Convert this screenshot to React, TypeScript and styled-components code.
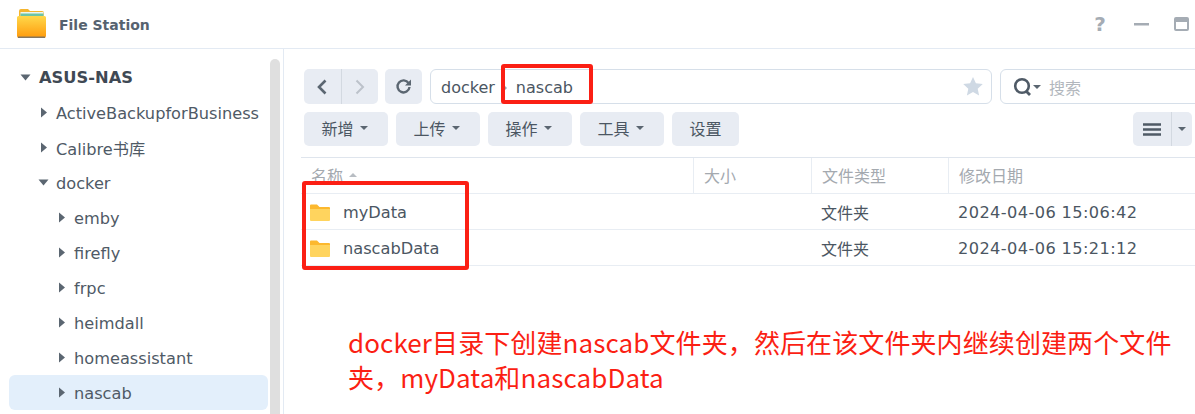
import React from 'react';
import styled, { createGlobalStyle } from 'styled-components';

const GlobalStyle = createGlobalStyle`
  html, body {
    margin: 0;
    padding: 0;
    background: #fff;
    overflow: hidden;
  }
  body {
    font-family: "DejaVu Sans", "Noto Sans CJK SC", sans-serif;
    color: #414b55;
  }
`;

const Page = styled.div`
  position: relative;
  width: 1195px;
  height: 414px;
  overflow: hidden;
  background: #fff;
`;

const TitleBar = styled.header`
  height: 48px;
  display: flex;
  align-items: center;
  padding-left: 16px;
  border-bottom: 1px solid #e3eaf3;
`;

const AppName = styled.span`
  margin-left: 12px;
  padding-top: 2px;
  font-size: 14px;
  font-weight: 700;
  color: #56626f;
`;

const WindowControls = styled.div`
  margin-left: auto;
  display: flex;
  align-items: center;
  padding-right: 6px;
`;

const HelpMark = styled.span`
  font-size: 20px;
  font-weight: 700;
  color: #a5acb4;
  width: 14px;
  text-align: center;
  margin-right: 27px;
`;

const MinimizeIcon = styled.svg`
  margin-right: 25px;
`;

const Body = styled.div`
  display: flex;
  height: 365px;
`;

const Sidebar = styled.nav`
  width: 284px;
  flex: none;
  box-sizing: border-box;
  border-right: 1px solid #e3eaf3;
  padding: 11px 0 0 9px;
  position: relative;
`;

const ScrollThumb = styled.div`
  position: absolute;
  left: 270px;
  top: 10px;
  width: 10px;
  height: 380px;
  border-radius: 5px;
  background: #dfdfdf;
`;

const TreeRow = styled.div<{ $depth: number; $selected?: boolean; $root?: boolean }>`
  width: 259px;
  height: 35px;
  box-sizing: border-box;
  display: flex;
  align-items: center;
  padding-left: ${p => (p.$root ? 11 : 11 + p.$depth * 18)}px;
  border-radius: 6px;
  background: ${p => (p.$selected ? '#e3effb' : 'transparent')};
  font-size: ${p => (p.$root ? 16.3 : 16.2)}px;
  font-weight: ${p => (p.$root ? 700 : 400)};
  color: ${p => (p.$root ? '#3f4954' : '#4f5a66')};
`;

const TreeLabel = styled.span<{ $root?: boolean }>`
  margin-left: ${p => (p.$root ? 8 : 7)}px;
  padding-top: ${p => (p.$root ? 0 : 1)}px;
  white-space: nowrap;
`;

const Main = styled.main`
  flex: 1;
  min-width: 0;
  padding: 20px 0 0 17px;
`;

const ToolRow = styled.div`
  display: flex;
  align-items: center;
  padding-left: 3px;
`;

const PathRow = styled(ToolRow)`
  height: 35px;
`;

const ActionRow = styled(ToolRow)`
  height: 34px;
  margin-top: 8px;
  gap: 8px;
`;

const NavGroup = styled.div`
  display: flex;
  width: 74px;
  height: 35px;
  background: #e8ecf3;
  border-radius: 5px;
  flex: none;
`;

const NavCell = styled.div<{ $divider?: boolean }>`
  flex: 1;
  display: flex;
  align-items: center;
  justify-content: center;
  border-left: ${p => (p.$divider ? '1px solid #d3d9e1' : 'none')};
`;

const RefreshButton = styled.div`
  width: 37px;
  height: 35px;
  margin-left: 7px;
  flex: none;
  background: #e8ecf3;
  border-radius: 5px;
  display: flex;
  align-items: center;
  justify-content: center;
`;

const PathBox = styled.div`
  width: 562px;
  height: 35px;
  margin-left: 8px;
  flex: none;
  box-sizing: border-box;
  border: 1px solid #d6dfe9;
  border-radius: 6px;
  display: flex;
  align-items: center;
  padding: 0 8px 0 10px;
  font-size: 16px;
  color: #4b5662;
`;

const PathText = styled.span`
  padding-top: 2px;
`;

const PathCaret = styled.span`
  width: 0;
  height: 0;
  margin: 2px 9px 0 8px;
  border-left: 4px solid #9aa3ad;
  border-top: 4px solid transparent;
  border-bottom: 4px solid transparent;
`;

const PathStar = styled.svg`
  margin-left: auto;
`;

const SearchBox = styled.div`
  width: 210px;
  height: 35px;
  margin-left: 8px;
  flex: none;
  box-sizing: border-box;
  border: 1px solid #d6dfe9;
  border-radius: 6px;
  display: flex;
  align-items: center;
  padding-left: 12px;
`;

const SearchHint = styled.span`
  margin-left: 8px;
  font-size: 16px;
  color: #b2b7bd;
`;

const ActionButton = styled.div<{ $plain?: boolean }>`
  width: ${p => (p.$plain ? 67 : 84)}px;
  height: 34px;
  flex: none;
  box-sizing: border-box;
  padding: 0 ${p => (p.$plain ? 0 : 3)}px 2px 0;
  background: #e8ecf3;
  border-radius: 5px;
  display: flex;
  align-items: center;
  justify-content: center;
  gap: 6px;
  font-size: 16px;
  color: #4b5662;
`;

const Caret = styled.span<{ $color?: string; $up?: boolean }>`
  width: 0;
  height: 0;
  border-top: 4px solid ${p => p.$color ?? '#5b6671'};
  border-left: 4px solid transparent;
  border-right: 4px solid transparent;
  transform: ${p => (p.$up ? 'rotate(180deg)' : 'none')};
`;

const ViewSwitch = styled.div`
  margin-left: auto;
  margin-right: 3px;
  width: 59px;
  height: 34px;
  display: flex;
  background: #e8ecf3;
  border-radius: 5px;
`;

const ViewCell = styled.div<{ $narrow?: boolean }>`
  width: ${p => (p.$narrow ? 20 : 38)}px;
  display: flex;
  align-items: center;
  justify-content: center;
  border-left: ${p => (p.$narrow ? '1px solid #d3d9e1' : 'none')};
`;

const FileTable = styled.div`
  margin-top: 11px;
  border-top: 1px solid #dfe5ed;
`;

const Columns = styled.div`
  display: grid;
  grid-template-columns: 392px 118px 137px 1fr;
  align-items: stretch;
  height: 35px;
  border-bottom: 1px solid #e8edf3;
`;

const HeaderCell = styled.div<{ $first?: boolean }>`
  display: flex;
  align-items: center;
  gap: 6px;
  padding: 0 0 2px 10px;
  border-left: ${p => (p.$first ? 'none' : '1px solid #e8edf3')};
  font-size: 16px;
  color: #a4a9af;
`;

const FileCell = styled.div<{ $date?: boolean }>`
  display: flex;
  align-items: center;
  padding-left: 10px;
  padding-top: ${p => (p.$date ? 2 : 0)}px;
  font-size: ${p => (p.$date ? 16.2 : 16)}px;
  letter-spacing: ${p => (p.$date ? 0.4 : 0)}px;
  color: #4b5662;
  white-space: nowrap;
`;

const NameCell = styled(FileCell)`
  padding-left: 9px;
  padding-top: 2px;
  gap: 13px;
  font-size: 16.2px;
`;

const RedFrame = styled.div`
  position: absolute;
  box-sizing: border-box;
  border: 4px solid #fb1f14;
  border-radius: 3px;
`;

const PathFrame = styled(RedFrame)`
  left: 501px;
  top: 64px;
  width: 92px;
  height: 40px;
`;

const FilesFrame = styled(RedFrame)`
  left: 302px;
  top: 181px;
  width: 167px;
  height: 89px;
`;

const Note = styled.p`
  position: absolute;
  left: 348px;
  top: 324px;
  width: 830px;
  margin: 0;
  font-family: "Noto Sans CJK SC", sans-serif;
  font-size: 26px;
  line-height: 35px;
  letter-spacing: 0.1px;
  color: #fb1f14;
`;

const TreeArrow = ({ open }: { open?: boolean }) =>
  open ? (
    <svg width="11" height="7" viewBox="0 0 11 7">
      <path d="M0.5 0.5h10L5.5 6.5z" fill="#5b6671" />
    </svg>
  ) : (
    <svg width="11" height="11" viewBox="0 0 11 11">
      <path d="M3 .5l6 5-6 5z" fill="#5b6671" />
    </svg>
  );

const AppIcon = () => (
  <svg width="31" height="30" viewBox="0 0 31 30">
    <defs>
      <linearGradient id="folderFront" x1="0" y1="0" x2="0" y2="1">
        <stop offset="0" stopColor="#ffd84a" />
        <stop offset="1" stopColor="#ff9a0c" />
      </linearGradient>
    </defs>
    <path d="M3 2a2 2 0 0 1 2-2h7l2 2h12a2 2 0 0 1 2 2v6H3z" fill="#f5b52e" />
    <rect x="4.5" y="3" width="23" height="5" fill="#eef6ee" />
    <rect x="4.5" y="4.5" width="23" height="2.5" fill="#6cc4a6" />
    <path d="M1 8.5A1.5 1.5 0 0 1 2.5 7h26A1.5 1.5 0 0 1 30 8.5V27a2 2 0 0 1-2 2H3a2 2 0 0 1-2-2z" fill="url(#folderFront)" />
    <rect x="2" y="27.5" width="27" height="1.5" fill="#85765f" />
  </svg>
);

const FolderIcon = () => (
  <svg width="20" height="18" viewBox="0 0 20 18">
    <path d="M0 1.5A1 1 0 0 1 1 .5h6l2.5 2.5H19a1 1 0 0 1 1 1v3H0z" fill="#fcb82e" />
    <path d="M0 5h20v11a1 1 0 0 1-1 1H1a1 1 0 0 1-1-1z" fill="#ffd45e" />
  </svg>
);

const tree = [
  { label: 'ActiveBackupforBusiness', depth: 1 },
  { label: 'Calibre书库', depth: 1 },
  { label: 'docker', depth: 1, open: true },
  { label: 'emby', depth: 2 },
  { label: 'firefly', depth: 2 },
  { label: 'frpc', depth: 2 },
  { label: 'heimdall', depth: 2 },
  { label: 'homeassistant', depth: 2 },
  { label: 'nascab', depth: 2, selected: true },
];

const files = [
  { name: 'myData', type: '文件夹', date: '2024-04-06 15:06:42' },
  { name: 'nascabData', type: '文件夹', date: '2024-04-06 15:21:12' },
];

const App = () => {
  return (
    <Page>
      <GlobalStyle />
      <TitleBar>
        <AppIcon />
        <AppName>File Station</AppName>
        <WindowControls>
          <HelpMark>?</HelpMark>
          <MinimizeIcon width="15" height="3" viewBox="0 0 15 3">
            <rect width="15" height="2.5" fill="#a5acb4" />
          </MinimizeIcon>
          <svg width="15" height="14" viewBox="0 0 15 14">
            <rect x="1" y="1" width="13" height="12" rx="1" fill="none" stroke="#a5acb4" strokeWidth="2" />
            <rect x="1" y="1" width="13" height="4" fill="#a5acb4" />
          </svg>
        </WindowControls>
      </TitleBar>
      <Body>
        <Sidebar>
          <ScrollThumb />
          <TreeRow $depth={0} $root>
            <TreeArrow open />
            <TreeLabel $root>ASUS-NAS</TreeLabel>
          </TreeRow>
          {tree.map(item => (
            <TreeRow key={item.label} $depth={item.depth} $selected={item.selected}>
              <TreeArrow open={item.open} />
              <TreeLabel>{item.label}</TreeLabel>
            </TreeRow>
          ))}
        </Sidebar>
        <Main>
          <PathRow>
            <NavGroup>
              <NavCell>
                <svg width="12" height="16" viewBox="0 0 12 16">
                  <path d="M9.5 1.5L3 8l6.5 6.5" fill="none" stroke="#5b6671" strokeWidth="2.6" />
                </svg>
              </NavCell>
              <NavCell $divider>
                <svg width="12" height="16" viewBox="0 0 12 16">
                  <path d="M2.5 1.5L9 8l-6.5 6.5" fill="none" stroke="#bcc2ca" strokeWidth="2" />
                </svg>
              </NavCell>
            </NavGroup>
            <RefreshButton>
              <svg width="17" height="17" viewBox="0 0 17 17">
                <path d="M13.6 5.2A6 6 0 1 0 14.5 9" fill="none" stroke="#5b6671" strokeWidth="2.4" />
                <path d="M16 1.5v6h-6z" fill="#5b6671" />
              </svg>
            </RefreshButton>
            <PathBox>
              <PathText>docker</PathText>
              <PathCaret />
              <PathText>nascab</PathText>
              <PathStar width="20" height="19" viewBox="0 0 20 19">
                <path d="M10 0l2.9 6.3 6.9.8-5.1 4.6 1.4 6.8L10 15.1 3.9 18.5l1.4-6.8L.2 7.1l6.9-.8z" fill="#cfd9e4" />
              </PathStar>
            </PathBox>
            <SearchBox>
              <svg width="20" height="20" viewBox="0 0 20 20">
                <circle cx="9" cy="9" r="6.8" fill="none" stroke="#4f5a66" strokeWidth="2.6" />
                <path d="M13 14l4 4" stroke="#4f5a66" strokeWidth="2.8" />
              </svg>
              <Caret />
              <SearchHint>搜索</SearchHint>
            </SearchBox>
          </PathRow>
          <ActionRow>
            <ActionButton>新增<Caret /></ActionButton>
            <ActionButton>上传<Caret /></ActionButton>
            <ActionButton>操作<Caret /></ActionButton>
            <ActionButton>工具<Caret /></ActionButton>
            <ActionButton $plain>设置</ActionButton>
            <ViewSwitch>
              <ViewCell>
                <svg width="18" height="13" viewBox="0 0 18 13">
                  <path d="M0 1.5h18M0 6.5h18M0 11.5h18" stroke="#4f5a66" strokeWidth="2.4" />
                </svg>
              </ViewCell>
              <ViewCell $narrow><Caret /></ViewCell>
            </ViewSwitch>
          </ActionRow>
          <FileTable>
            <Columns>
              <HeaderCell $first>名称<Caret $color="#b8bdc3" $up /></HeaderCell>
              <HeaderCell>大小</HeaderCell>
              <HeaderCell>文件类型</HeaderCell>
              <HeaderCell>修改日期</HeaderCell>
            </Columns>
            {files.map(file => (
              <Columns key={file.name}>
                <NameCell><FolderIcon />{file.name}</NameCell>
                <FileCell />
                <FileCell>{file.type}</FileCell>
                <FileCell $date>{file.date}</FileCell>
              </Columns>
            ))}
          </FileTable>
        </Main>
      </Body>
      <PathFrame />
      <FilesFrame />
      <Note>docker目录下创建nascab文件夹，然后在该文件夹内继续创建两个文件夹，myData和nascabData</Note>
    </Page>
  );
};

export default App;
